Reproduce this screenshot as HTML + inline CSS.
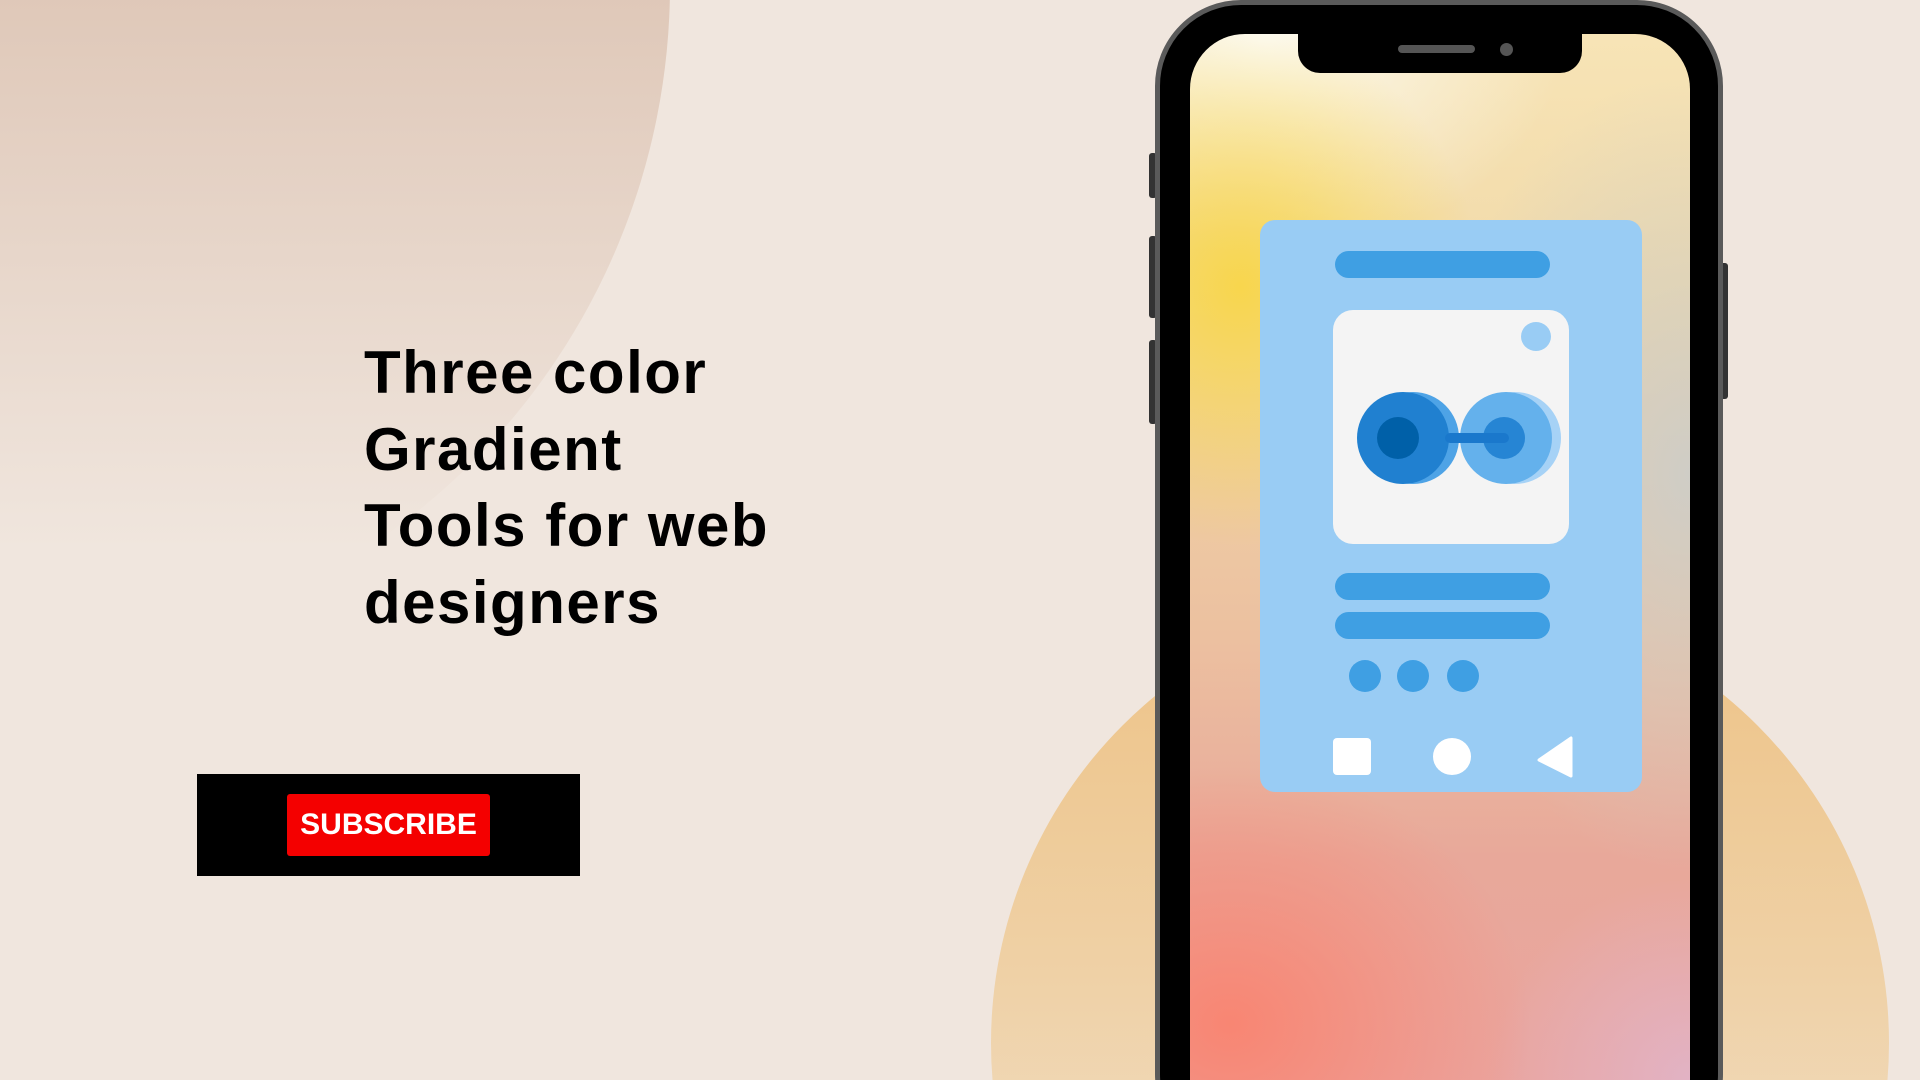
<!DOCTYPE html>
<html><head><meta charset="utf-8"><style>
html,body{margin:0;padding:0;width:1920px;height:1080px;overflow:hidden}
#root{width:1920px;height:1080px;position:relative;overflow:hidden;background:#f0e6de;font-family:"Liberation Sans",sans-serif}
.abs{position:absolute}
</style></head><body><div id="root">
<div class="abs" style="left:-680px;top:-690px;width:1350px;height:1350px;border-radius:50%;background:linear-gradient(180deg,#dec6b6 48%,#f0e6de 92%)"></div>
<div class="abs" style="left:991px;top:594px;width:898px;height:898px;border-radius:50%;background:linear-gradient(180deg,#edc285 0%,#efd0a4 40%,#f0dcc0 70%)"></div>

<div class="abs" style="left:364px;top:335px;font-size:60px;line-height:76.5px;font-weight:bold;color:#000;letter-spacing:1.5px">Three color<br>Gradient<br>Tools for web<br>designers</div>

<div class="abs" style="left:197px;top:774px;width:383px;height:102px;background:#000"></div>
<div class="abs" style="left:287px;top:794px;width:203px;height:62px;background:#f40000;border-radius:3px;color:#fff;font-weight:bold;font-size:30px;line-height:62px;text-align:center">SUBSCRIBE</div>

<div class="abs" style="left:1149px;top:153px;width:8px;height:45px;background:#333;border-radius:3px"></div>
<div class="abs" style="left:1149px;top:236px;width:8px;height:82px;background:#333;border-radius:3px"></div>
<div class="abs" style="left:1149px;top:340px;width:8px;height:84px;background:#333;border-radius:3px"></div>
<div class="abs" style="left:1720px;top:263px;width:8px;height:136px;background:#333;border-radius:3px"></div>
<div class="abs" style="left:1155px;top:0;width:568px;height:1160px;background:#000;border:5px solid #5a5a5a;box-sizing:border-box;border-radius:86px"></div>
<div class="abs" style="left:1190px;top:34px;width:500px;height:1100px;border-radius:55px;overflow:hidden;
background:
radial-gradient(ellipse 240px 260px at 10% 23%,rgba(248,214,72,0.95),rgba(248,214,72,0) 100%),
radial-gradient(ellipse 300px 260px at 8% 90%,rgba(250,130,110,0.9),rgba(250,130,110,0) 100%),
radial-gradient(ellipse 260px 400px at 100% 40%,rgba(205,205,200,0.95),rgba(205,205,200,0) 100%),
radial-gradient(ellipse 200px 200px at 100% 95%,rgba(225,180,200,0.9),rgba(225,180,200,0) 100%),
radial-gradient(ellipse 300px 220px at 15% 0%,rgba(252,250,240,1),rgba(252,250,240,0) 100%),
linear-gradient(180deg,#f7e4b6 0%,#f1d9a8 25%,#ecc0a0 55%,#e8a89a 75%,#eaa4a0 100%)"></div>
<div class="abs" style="left:1298px;top:30px;width:284px;height:43px;background:#000;border-radius:0 0 22px 22px"></div>
<div class="abs" style="left:1398px;top:45px;width:77px;height:8px;background:#555;border-radius:4px"></div>
<div class="abs" style="left:1500px;top:43px;width:13px;height:13px;background:#555;border-radius:50%"></div>

<div class="abs" style="left:1260px;top:220px;width:382px;height:572px;background:#99ccf4;border-radius:15px"></div>
<div class="abs" style="left:1335px;top:251px;width:215px;height:27px;background:#3f9fe3;border-radius:14px"></div>
<div class="abs" style="left:1333px;top:310px;width:236px;height:234px;background:#f4f4f4;border-radius:20px"></div>
<div class="abs" style="left:1521px;top:322px;width:30px;height:29px;background:#99ccf4;border-radius:50%"></div>
<svg class="abs" style="left:1333px;top:310px" width="236" height="234">
<circle cx="80" cy="128" r="46" fill="#4ea3e6"/>
<circle cx="70" cy="128" r="46" fill="#2080d0"/>
<circle cx="65" cy="128" r="21" fill="#0060a8"/>
<circle cx="182" cy="128" r="46" fill="#a6d2f6"/>
<circle cx="173" cy="128" r="46" fill="#64b1ec"/>
<circle cx="171" cy="128" r="21" fill="#2685d4"/>
<rect x="112" y="123" width="64" height="10" rx="5" fill="#1a78cc"/>
</svg>
<div class="abs" style="left:1335px;top:573px;width:215px;height:27px;background:#3f9fe3;border-radius:14px"></div>
<div class="abs" style="left:1335px;top:612px;width:215px;height:27px;background:#3f9fe3;border-radius:14px"></div>
<div class="abs" style="left:1349px;top:660px;width:32px;height:32px;background:#3f9fe3;border-radius:50%"></div>
<div class="abs" style="left:1397px;top:660px;width:32px;height:32px;background:#3f9fe3;border-radius:50%"></div>
<div class="abs" style="left:1447px;top:660px;width:32px;height:32px;background:#3f9fe3;border-radius:50%"></div>
<div class="abs" style="left:1333px;top:738px;width:38px;height:37px;background:#fff;border-radius:4px"></div>
<div class="abs" style="left:1433px;top:738px;width:38px;height:37px;background:#fff;border-radius:50%"></div>
<svg class="abs" style="left:1535px;top:736px" width="40" height="42"><path d="M36 2 L36 40 L4 24 Z" fill="#fff" stroke="#fff" stroke-width="3" stroke-linejoin="round"/></svg>
</div></body></html>
